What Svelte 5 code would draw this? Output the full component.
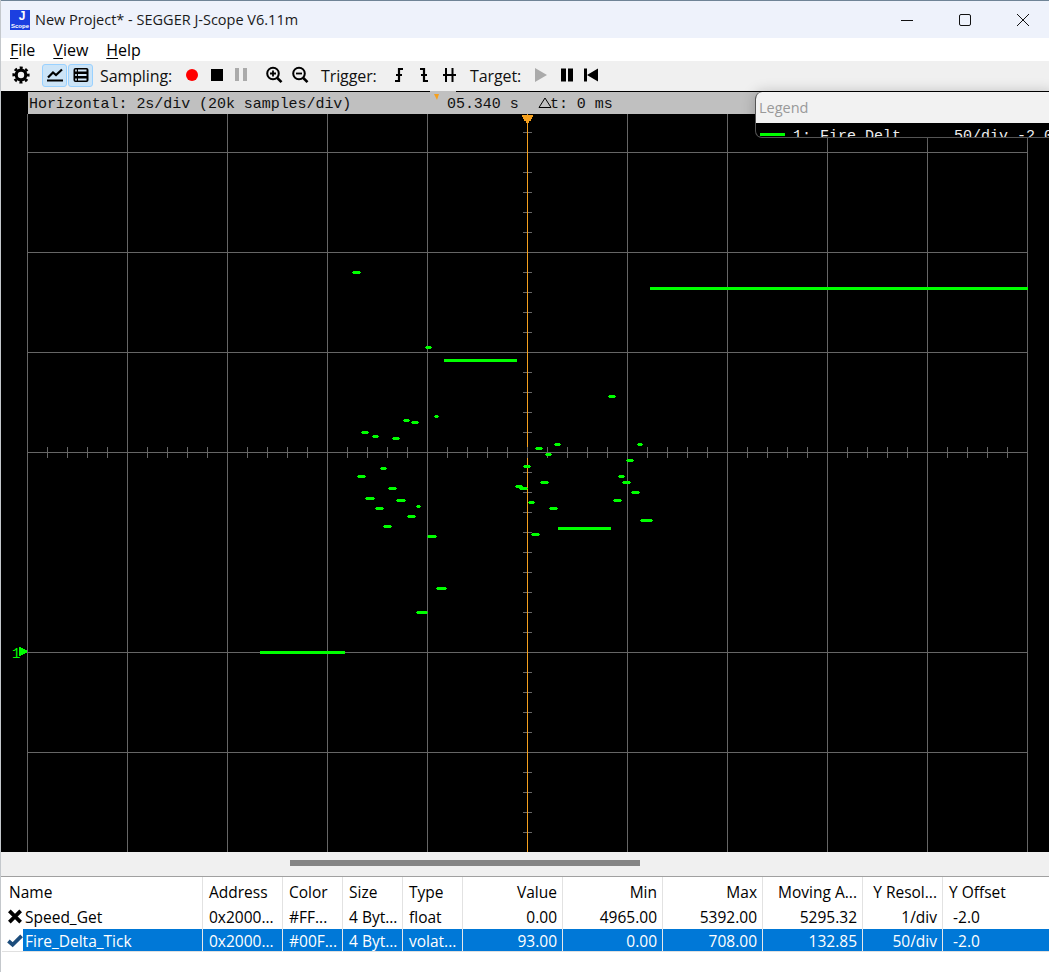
<script>
  const vLines = Array.from({ length: 11 }, (_, i) => 27 + i * 100);
  const hLines = [38, 138, 238, 338, 538, 638];
  const hTicks = Array.from({ length: 49 }, (_, i) => 47 + i * 20);
  const vTicks = Array.from({ length: 36 }, (_, i) => 18 + i * 20);
  // long trace runs: [x1, x2, y] in page coordinates
  const segs = [[650, 1028, 288], [444, 517, 360], [558, 611, 528], [260, 345, 652]];
  // short samples: [centre x, y, width] in page coordinates
  const dots = [
    [406, 420, 5], [415, 422, 6], [436, 416, 3], [365, 432, 6], [375, 436, 5], [396, 438, 6],
    [539, 448, 6], [557, 444, 5], [548, 454, 5], [640, 444, 4], [383, 468, 5], [361, 476, 7],
    [527, 466, 6], [630, 460, 6], [621, 476, 5], [626, 482, 7], [544, 482, 7], [519, 486, 6],
    [523, 488, 7], [392, 488, 7], [635, 492, 7], [370, 498, 8], [401, 500, 8], [617, 500, 7],
    [531, 502, 5], [418, 506, 3], [379, 508, 7], [553, 508, 7], [411, 516, 7], [646, 520, 11],
    [387, 526, 7], [432, 536, 8], [535, 534, 7], [356, 272, 7], [428, 347, 5], [612, 396, 6],
    [441, 588, 9], [422, 612, 10]
  ];
  const cols = [
    { w: 201, label: 'Name' },
    { w: 80, label: 'Address' },
    { w: 60, label: 'Color' },
    { w: 60, label: 'Size' },
    { w: 60, label: 'Type' },
    { w: 100, label: 'Value', right: true },
    { w: 100, label: 'Min', right: true },
    { w: 100, label: 'Max', right: true },
    { w: 100, label: 'Moving A...', right: true },
    { w: 80, label: 'Y Resol...', right: true },
    { w: 107, label: 'Y Offset' }
  ];
  const rows = [
    { icon: 'x', cells: ['Speed_Get', '0x2000...', '#FF...', '4 Byt...', 'float', '0.00', '4965.00', '5392.00', '5295.32', '1/div', ' -2.0'] },
    { icon: 'check', selected: true, cells: ['Fire_Delta_Tick', '0x2000...', '#00F...', '4 Byt...', 'volat...', '93.00', '0.00', '708.00', '132.85', '50/div', ' -2.0'] }
  ];
  const gridCols = cols.map((c) => c.w + 'px').join(' ');
</script>

<div class="window">
  <header class="titlebar">
    <div class="logo"><span class="logo-j">J</span><span class="logo-s">Scope</span></div>
    <span class="title">New Project* - SEGGER J-Scope V6.11m</span>
    <div class="winctl">
      <svg width="14" height="14" viewBox="0 0 14 14"><path d="M1 7.5H13" stroke="#111" fill="none" /></svg>
      <svg width="14" height="14" viewBox="0 0 14 14"><rect x="1.5" y="1.5" width="11" height="11" rx="1.5" stroke="#111" fill="none" /></svg>
      <svg width="14" height="14" viewBox="0 0 14 14"><path d="M1 1L13 13M13 1L1 13" stroke="#111" fill="none" /></svg>
    </div>
  </header>

  <nav class="menu">
    <span><u>F</u>ile</span>
    <span><u>V</u>iew</span>
    <span><u>H</u>elp</span>
  </nav>

  <div class="toolbar">
    <svg class="gear" width="20" height="20" viewBox="0 0 20 20">
      <circle cx="10" cy="10" r="4.8" fill="none" stroke="#000" stroke-width="3.2" />
      <circle cx="10" cy="10" r="7.3" fill="none" stroke="#000" stroke-width="2.6" stroke-dasharray="3 2.73" stroke-dashoffset="1.5" />
    </svg>
    <div class="toggles">
      <button class="toggle" aria-label="Chart">
        <svg width="18" height="16" viewBox="0 0 18 16">
          <path d="M1 13.5H17" stroke="#000" stroke-width="2" fill="none" />
          <path d="M2 10.5L7 5.5L10 8L16 2.5" stroke="#000" stroke-width="2.2" fill="none" />
        </svg>
      </button>
      <button class="toggle" aria-label="Table">
        <svg width="18" height="16" viewBox="0 0 18 16">
          <rect x="1.5" y="1" width="15" height="14" rx="2" fill="#000" />
          <path d="M6 3.5H14.5M6 8H14.5M6 12.5H14.5" stroke="#d5e9f9" stroke-width="2" />
          <path d="M3.2 3.5H4.8M3.2 8H4.8M3.2 12.5H4.8" stroke="#d5e9f9" stroke-width="2" />
        </svg>
      </button>
    </div>

    <span class="label sampling">Sampling:</span>
    <div class="icons">
      <svg width="16" height="16" viewBox="0 0 16 16"><circle cx="8" cy="8" r="6" fill="#f00" /></svg>
      <svg width="16" height="16" viewBox="0 0 16 16"><rect x="2" y="2" width="12" height="12" fill="#000" /></svg>
      <svg width="16" height="16" viewBox="0 0 16 16"><path d="M1 1H5V14H1ZM9 1H13V14H9Z" fill="#aaa" /></svg>
    </div>

    <div class="icons zooms">
      <svg width="18" height="18" viewBox="0 0 18 18">
        <circle cx="8" cy="7.5" r="5.8" fill="none" stroke="#000" stroke-width="2" />
        <path d="M12.3 12L16.5 16.2" stroke="#000" stroke-width="2.6" />
        <path d="M5 7.5H11M8 4.5V10.5" stroke="#000" stroke-width="1.8" />
      </svg>
      <svg width="18" height="18" viewBox="0 0 18 18">
        <circle cx="8" cy="7.5" r="5.8" fill="none" stroke="#000" stroke-width="2" />
        <path d="M12.3 12L16.5 16.2" stroke="#000" stroke-width="2.6" />
        <path d="M5 7.5H11" stroke="#000" stroke-width="1.8" />
      </svg>
    </div>

    <span class="label trigger">Trigger:</span>
    <div class="icons">
      <svg width="16" height="16" viewBox="0 0 16 16">
        <path d="M4 14H8V2H12" stroke="#000" stroke-width="2.2" fill="none" />
        <path d="M5 8H11" stroke="#000" stroke-width="2" />
      </svg>
      <svg width="16" height="16" viewBox="0 0 16 16">
        <path d="M4 2H8V14H12" stroke="#000" stroke-width="2.2" fill="none" />
        <path d="M5 8H11" stroke="#000" stroke-width="2" />
      </svg>
      <svg width="16" height="16" viewBox="0 0 16 16">
        <path d="M5 1V15M11.5 1V15" stroke="#000" stroke-width="2" fill="none" />
        <path d="M2 8H15" stroke="#000" stroke-width="2" />
      </svg>
    </div>

    <span class="label target">Target:</span>
    <div class="icons">
      <svg width="16" height="16" viewBox="0 0 16 16"><path d="M2 1L14 8L2 15Z" fill="#aaa" /></svg>
      <svg width="16" height="16" viewBox="0 0 16 16"><path d="M3 1.5H8V14.5H3ZM10 1.5H15V14.5H10Z" fill="#000" /></svg>
      <svg width="16" height="16" viewBox="0 0 16 16"><path d="M1 1.5H4V14.5H1ZM4 8L15 1.5V14.5Z" fill="#000" /></svg>
    </div>
  </div>

  <section class="scope">
    <div class="hbar">
      <span class="h-text">Horizontal: 2s/div (20k samples/div)</span>
      <span class="h-tab"><i></i></span>
      <span class="h-time">05.340 s</span>
      <span class="h-delta"><svg width="14" height="11" viewBox="0 0 14 11"><path d="M1 10.5H13L7 1Z" fill="none" stroke="#000" /></svg>t: 0 ms</span>
    </div>
    <svg class="plot" width="1049" height="738" viewBox="0 0 1049 738" shape-rendering="crispEdges">
      {#each vLines as x}
        {#if x !== 527}<rect x={x} y="0" width="1" height="738" fill="#666" />{/if}
      {/each}
      {#each hLines as y}
        <rect x="27" y={y} width="1001" height="1" fill="#666" />
      {/each}
      {#each vTicks as y}
        {#if y !== 338}<rect x="523" y={y} width="9" height="1" fill="#666" />{/if}
      {/each}
      <rect x="527" y="0" width="1" height="738" fill="#f5a01e" />
      {#each hTicks as x}
        <rect x={x} y="333" width="1" height="11" fill="#666" />
      {/each}
      <path d="M522 1H533V3H532V5H531V7H529V9H526V7H524V5H523V3H522Z" fill="#f5a01e" />
      {#each segs as s}
        <rect x={s[0]} y={s[2] - 115} width={s[1] - s[0]} height="3" fill="#0f0" />
      {/each}
      {#each dots as d}
        <rect x={d[0] - d[2] / 2} y={d[1] - 115} width={d[2]} height="3" fill="#0f0" />
        <rect x={d[0] - d[2] / 2 - 1} y={d[1] - 114} width={d[2] + 2} height="1" fill="#0f0" />
      {/each}
      <path d="M19 533H21V534H23V535H25V536H27V539H25V540H23V541H21V542H19Z" fill="#0f0" />
      <text x="12" y="544" class="marker">1</text>
    </svg>
    <aside class="legend">
      <div class="legend-head">Legend</div>
      <div class="legend-body">
        <i class="legend-swatch"></i>
        <span class="legend-name">1: Fire_Delt</span>
        <span class="legend-val">50/div -2.0</span>
      </div>
    </aside>
  </section>

  <div class="hscroll"><div class="thumb"></div></div>

  <div class="table">
    <div class="tr head" style="grid-template-columns: {gridCols}">
      {#each cols as c}
        <div class="td" class:right={c.right}>{c.label}</div>
      {/each}
    </div>
    {#each rows as row}
      <div class="tr body" class:selected={row.selected} style="grid-template-columns: {gridCols}">
        {#each row.cells as cell, i}
          {#if i === 0}
            <div class="td first">
              <span class="state">
                {#if row.icon === 'x'}
                  <svg width="17" height="17" viewBox="0 0 17 17"><path d="M2.5 2.5L14.5 14.5M14.5 2.5L2.5 14.5" stroke="#000" stroke-width="4" /></svg>
                {:else}
                  <svg width="17" height="17" viewBox="0 0 17 17"><path d="M1.5 9L6 13L15.5 3.5" stroke="#1d4d7c" stroke-width="4" fill="none" /></svg>
                {/if}
              </span>
              <span class="name">{cell}</span>
            </div>
          {:else}
            <div class="td" class:right={cols[i].right}>{cell}</div>
          {/if}
        {/each}
      </div>
    {/each}
  </div>
</div>

<style>
  :global(body) { margin: 0; background: #8aa0b4; }
  .window {
    width: 1049px; height: 972px; overflow: hidden; display: flex; flex-direction: column;
    font-family: "Open Sans", "Noto Sans", sans-serif; color: #000; background: #fff;
    position: relative;
  }
  .window::after {
    content: ""; position: absolute; left: 0; top: 0; bottom: 0; width: 1px; background: #c4c8cc;
  }
  .titlebar {
    height: 37px; background: #eef2fb; display: flex; align-items: center; padding-left: 10px;
    border-top: 1px solid #6f8496; flex: none;
  }
  .logo {
    width: 20px; height: 20px; background: #1c3fe0; color: #fff; display: flex; flex-direction: column;
    align-items: center; overflow: hidden; font-family: "Liberation Sans", sans-serif;
  }
  .logo-j { font-size: 12px; font-weight: 700; line-height: 13px; margin-left: 4px; }
  .logo-s { font-size: 6px; font-weight: 700; line-height: 7px; }
  .title { margin-left: 5px; font-size: 14.5px; color: #1a1a1a; }
  .winctl { margin-left: auto; display: flex; gap: 44px; padding-right: 19px; align-items: center; }
  .menu {
    height: 23px; background: #fff; display: flex; align-items: center; padding: 1px 0 0 10px; gap: 18px;
    font-size: 16px; flex: none; box-sizing: border-box;
  }
  .menu u { text-underline-offset: 2px; }
  .toolbar {
    height: 30px; background: #f0f0f0; display: flex; align-items: center; flex: none;
    box-sizing: border-box; padding: 0 0 2px 11px;
  }
  .toggles { display: flex; margin-left: 11px; gap: 1px; }
  .toggle {
    width: 25px; height: 23px; padding: 0; display: flex; align-items: center; justify-content: center;
    background: #cce4f7; border: 1px solid #99d1ff; border-radius: 3px; box-sizing: border-box;
  }
  .label { font-size: 16px; letter-spacing: -0.1px; margin-top: 2px; display: block; color: #111; }
  .sampling { margin-left: 7px; width: 84px; }
  .trigger { margin-left: 12px; width: 70px; }
  .target { margin-left: 13px; width: 63px; }
  .icons { display: flex; gap: 9px; align-items: center; }
  .zooms { gap: 8px; margin-left: 15px; }
  .scope {
    height: 761px; background: #000; position: relative; flex: none;
    padding-top: 1px; box-sizing: border-box;
  }
  .hbar {
    height: 22px; margin-left: 28px; background: #c0c0c0; display: flex; align-items: center;
    font-family: "Liberation Mono", monospace; font-size: 15px; letter-spacing: -0.05px; color: #111; white-space: pre; position: relative;
    padding-top: 2px; box-sizing: border-box;
  }
  .h-text { margin-left: 1px; width: 401px; }
  .h-tab { position: absolute; left: 402px; top: -1px; width: 26px; height: 1px; background: #c0c0c0; }
  .h-tab i {
    position: absolute; left: 4px; top: 3px; width: 0; height: 0;
    border-left: 3px solid transparent; border-right: 2px solid transparent; border-top: 6px solid #f5a01e;
  }
  .h-time { margin-left: 17px; width: 91px; }
  .h-delta { display: flex; align-items: center; }
  .h-delta svg { margin-top: -4px; margin-right: -2px; }
  .plot { display: block; }
  .marker { font-family: "Liberation Mono", monospace; font-size: 14px; fill: #0f0; }
  .legend {
    position: absolute; left: 755px; top: 1px; width: 300px; height: 46px; border-radius: 7px;
    overflow: hidden; border: 1px solid #555; border-top: none; box-sizing: border-box; background: #000;
    box-shadow: 0 0 14px rgba(0, 0, 0, 0.22);
  }
  .legend-head {
    height: 31px; background: #f2f2f2; color: #999; font-size: 14.5px; line-height: 31px; padding-left: 3px;
  }
  .legend-body { position: relative; height: 15px; font-family: "Liberation Mono", monospace; font-size: 15px; color: #eee; white-space: pre; }
  .legend-swatch { position: absolute; left: 4px; top: 10px; width: 25px; height: 3px; background: #0f0; }
  .legend-name { position: absolute; left: 37px; top: 5px; line-height: 17px; }
  .legend-val { position: absolute; left: 198px; top: 5px; line-height: 17px; }
  .hscroll {
    height: 25px; background: #f0f0f0; flex: none; position: relative;
    border-bottom: 1px solid #a0a0a0; box-sizing: border-box; padding: 8px 0 0 290px;
  }
  .thumb { width: 350px; height: 6px; background: #858585; }
  .table { flex: 1; background: #fff; padding-left: 2px; font-size: 15.5px; }
  .tr { display: grid; }
  .head { height: 27px; }
  .body { height: 25px; }
  .body.selected { height: 23px; border-bottom: 1px solid #e0e0e0; box-sizing: border-box; }
  .td {
    box-sizing: border-box; padding: 0 5px 0 6px; display: flex; align-items: center; white-space: pre;
    border-right: 1px solid #e2e2e2; min-width: 0; overflow: hidden;
  }
  .head .td { padding-top: 2px; }
  .selected .td { padding-top: 2px; }
  .right { justify-content: flex-end; }
  .first { padding: 0; }
  .head .td:first-child { padding-left: 7px; }
  .state { width: 21px; padding-left: 5px; box-sizing: border-box; display: flex; align-items: center; flex: none; height: 100%; background: #fff; }
  .name { flex: 1; padding-left: 2px; height: 100%; display: flex; align-items: center; }
  .selected .td { background: #0078d7; color: #fff; border-right-color: #e8e8e8; }
  .selected .first { background: #fff; padding-top: 0; }
  .selected .name { background: #0078d7; padding-top: 2px; box-sizing: border-box; }
</style>
